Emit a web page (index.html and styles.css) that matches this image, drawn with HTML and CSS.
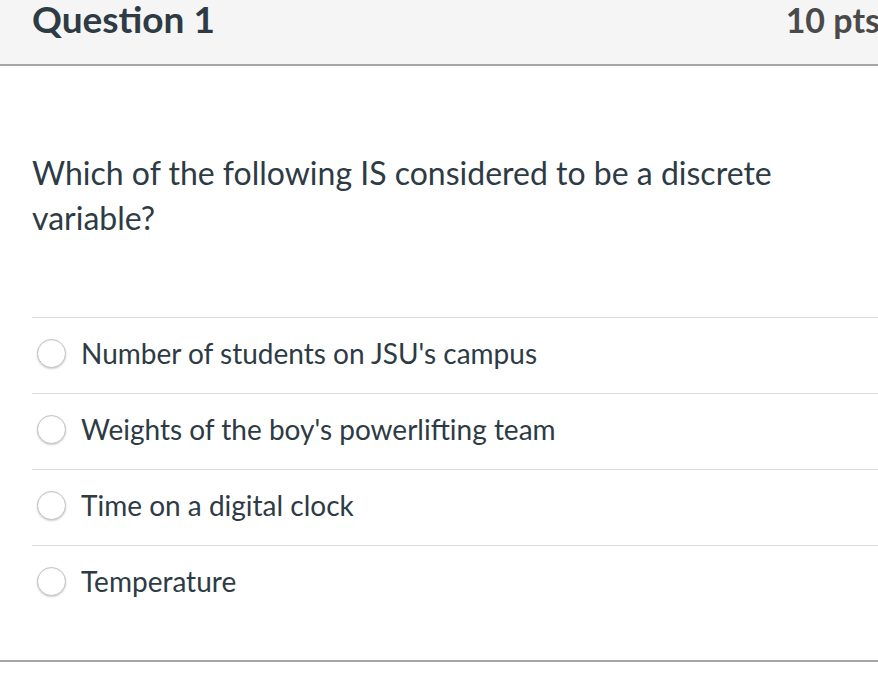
FILE: index.html
```html
<!DOCTYPE html>
<html>
<head>
<meta charset="utf-8">
<link rel="stylesheet" href="styles.css">
</head>
<body>
<div class="question">
  <div class="header">
    <h2 class="title">Question 1</h2>
    <span class="pts">10 pts</span>
  </div>
  <div class="content">
    <p class="text">Which of the following IS considered to be a discrete variable?</p>
    <ul class="answers">
      <li class="answer"><span class="radio"></span><span class="label">Number of students on JSU's campus</span></li>
      <li class="answer"><span class="radio"></span><span class="label">Weights of the boy's powerlifting team</span></li>
      <li class="answer"><span class="radio"></span><span class="label">Time on a digital clock</span></li>
      <li class="answer"><span class="radio"></span><span class="label">Temperature</span></li>
    </ul>
  </div>
  <div class="footer"></div>
</div>
</body>
</html>
```
FILE: styles.css
```css
html, body {
  margin: 0;
  padding: 0;
  background: #ffffff;
  font-family: Lato, "Noto Sans", sans-serif;
  color: #2d3b45;
}
.question {
  width: 878px;
}
.header {
  height: 64px;
  background: #f5f5f5;
  border-bottom: 2px solid #a5a5a5;
  display: flex;
  justify-content: space-between;
  align-items: baseline;
  padding-left: 32px;
  overflow: hidden;
  white-space: nowrap;
}
.title {
  margin: 0;
  font-size: 37px;
  font-weight: 700;
  line-height: 38px;
  color: #2d3b45;
}
.pts {
  font-size: 34px;
  font-weight: 700;
  line-height: 38px;
  color: #4a4a4a;
  margin-right: -2px;
}
.content {
  padding-left: 32px;
}
.text {
  margin: 0;
  padding-top: 84px;
  font-size: 32px;
  line-height: 45px;
  max-width: 790px;
}
.answers {
  list-style: none;
  margin: 77px 0 0 0;
  padding: 0;
}
.answer {
  border-top: 1px solid #dcdcdc;
  box-sizing: border-box;
  height: 76px;
  display: flex;
  align-items: center;
  gap: 15px;
  padding: 0 0 6px 5px;
}
.radio {
  width: 27px;
  height: 27px;
  border-radius: 50%;
  border: 1px solid #c2c2c2;
  box-shadow: 0 1px 2px rgba(0,0,0,0.2), inset 0 1px 1px rgba(0,0,0,0.04);
  background: #fff;
  flex: none;
  margin-top: 2px;
}
.label {
  font-size: 28px;
  line-height: 30px;
}
.footer {
  margin-top: 39px;
  border-top: 2px solid #a5a5a5;
}
```
